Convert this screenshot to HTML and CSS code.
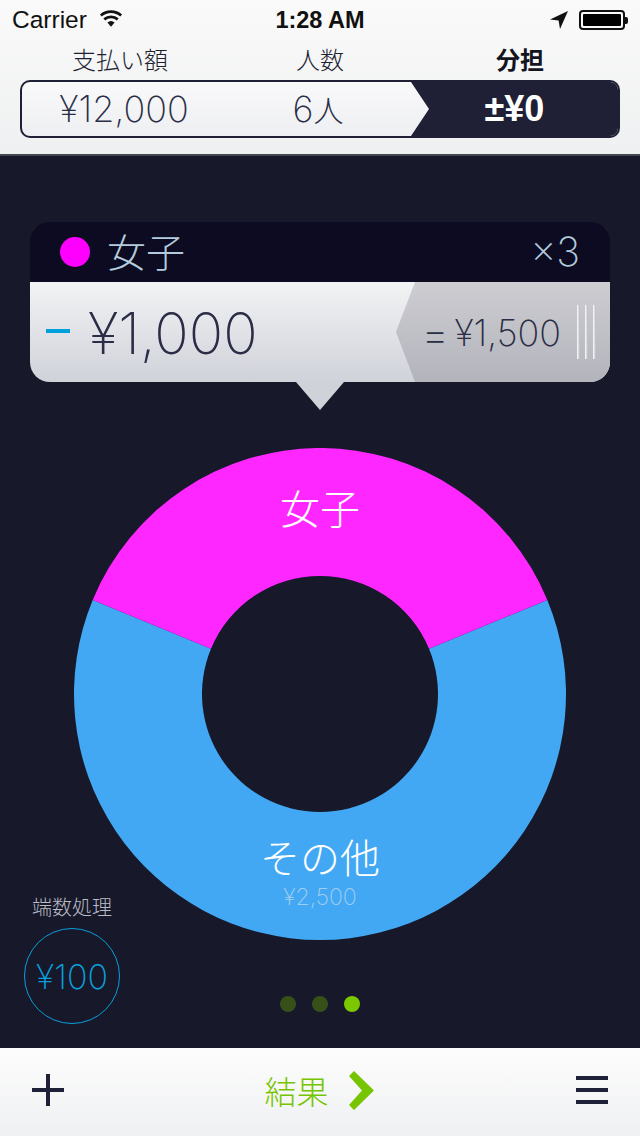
FILE: index.html
```html
<!DOCTYPE html>
<html lang="ja">
<head>
<meta charset="utf-8">
<title>分担</title>
<link rel="stylesheet" href="styles.css">
</head>
<body>
<div class="app">
  <header class="header">
    <div class="status">
      <div class="status-left">
        <span>Carrier</span>
        <svg class="wifi" width="24" height="18" viewBox="0 0 26 18"><path d="M13 17.500l-3.900-4.800a6 6 0 0 1 7.800 0z" fill="#111"/><path d="M5.700 9.400a11 11 0 0 1 14.600 0M2 5.200a16.600 16.600 0 0 1 22 0" fill="none" stroke="#111" stroke-width="3"/></svg>
      </div>
      <div class="status-time">1:28 AM</div>
      <div class="status-right">
        <svg width="20" height="20" viewBox="0 0 20 20"><path d="M19 1L1 9.600l8.600 1 1.400 8.400z" fill="#111"/></svg>
        <div class="battery"><div class="battery-fill"></div></div>
        <div class="battery-cap"></div>
      </div>
    </div>
    <div class="labels">
      <div class="label">支払い額</div>
      <div class="label">人数</div>
      <div class="label label-active">分担</div>
    </div>
    <div class="segment">
      <div class="seg seg-amount">¥12,000</div>
      <div class="seg seg-people">6<span class="unit">人</span></div>
      <div class="seg seg-split">±¥0</div>
    </div>
  </header>

  <main class="main">
    <section class="card">
      <div class="card-head">
        <span class="swatch"></span>
        <span class="group-name">女子</span>
        <span class="times">×3</span>
      </div>
      <div class="card-body">
        <span class="minus"></span>
        <span class="amount">¥1,000</span>
        <div class="total">
          <span class="equals">=</span>
          <span class="total-text">¥1,500</span>
          <span class="grip"><i></i><i></i><i></i></span>
        </div>
      </div>
      <div class="pointer"></div>
    </section>

    <div class="chart">
      <svg class="donut" width="492" height="492" viewBox="-246 -246 492 492">
        <path d="M-227.300 -94.100A246 246 0 1 0 227.300 -94.100L109 -45.200A118 118 0 1 1 -109 -45.200Z" fill="#42a8f3"/>
        <path d="M-227.300 -94.100A246 246 0 0 1 227.300 -94.100L109 -45.200A118 118 0 0 0 -109 -45.200Z" fill="#ff27ff"/>
      </svg>
      <div class="slice-label slice-top">女子</div>
      <div class="slice-label slice-bottom">その他</div>
      <div class="slice-value">¥2,500</div>
    </div>

    <div class="rounding">
      <div class="rounding-title">端数処理</div>
      <div class="rounding-circle">¥100</div>
    </div>

    <div class="dots">
      <span class="dot"></span>
      <span class="dot"></span>
      <span class="dot dot-on"></span>
    </div>
  </main>

  <footer class="tabbar">
    <svg width="32" height="32" viewBox="0 0 32 32"><path d="M14 0h4v14h14v4H18v14h-4V18H0v-4h14z" fill="#1e2138"/></svg>
    <div class="result">
      <span>結果</span>
      <svg width="25" height="39" viewBox="0 0 25 39"><path d="M0 5L5 0l20 19.500L5 39l-5-5 13-14.500z" fill="#77c500"/></svg>
    </div>
    <div class="menu"><i></i><i></i><i></i></div>
  </footer>
</div>
</body>
</html>
```
FILE: styles.css
```css
* { box-sizing: border-box; }
html, body { margin: 0; padding: 0; }
body {
  width: 640px;
  height: 1136px;
  overflow: hidden;
  font-family: Inter, "Noto Sans CJK JP", sans-serif;
  font-weight: 250;
  background: #171829;
}
.app { width: 640px; height: 1136px; display: flex; flex-direction: column; }

.header {
  height: 156px;
  flex: none;
  padding: 0 20px;
  background: linear-gradient(#fafafa, #eff0f1);
  border-bottom: 2px solid #45464f;
}
.status {
  height: 40px;
  margin: 0 -8px;
  display: grid;
  grid-template-columns: 1fr auto 1fr;
  align-items: center;
  color: #111;
  font-family: "Liberation Sans", sans-serif;
  font-weight: 400;
  font-size: 24.500px;
}
.status-left { display: flex; align-items: center; gap: 12px; }
.wifi { margin-top: -3px; }
.status-time { font-weight: 700; font-size: 23.500px; }
.status-right { display: flex; align-items: center; justify-content: flex-end; }
.status-right svg { margin-right: 10px; }
.battery {
  width: 46px;
  height: 20px;
  border: 2px solid #111;
  border-radius: 4px;
  padding: 2px;
}
.battery-fill { height: 100%; background: #000; border-radius: 1px; }
.battery-cap { width: 3px; height: 7px; background: #111; border-radius: 0 2px 2px 0; }

.labels {
  height: 40px;
  padding-bottom: 4px;
  display: grid;
  grid-template-columns: 200px 200px 200px;
  align-items: center;
  text-align: center;
  font-family: "Noto Sans CJK JP", sans-serif;
  font-weight: 300;
  font-size: 24px;
  color: #1e1f33;
}
.label-active { font-weight: 700; color: #14141f; }

.segment {
  height: 58px;
  border: 2px solid #1f2035;
  border-radius: 10px;
  display: flex;
  align-items: center;
  background: linear-gradient(#f9f9fa, #eeeff2);
  overflow: hidden;
  color: #2b2e48;
  font-size: 36px;
}
.seg { height: 100%; display: flex; align-items: center; justify-content: center; }
.seg-amount { width: 204px; }
.seg-people { width: 188px; padding-right: 4px; }
.unit { font-family: "Noto Sans CJK JP", sans-serif; font-size: 30px; line-height: 1; }
.seg-split {
  flex: 1;
  background: #1f2035;
  color: #fff;
  font-family: "Liberation Sans", sans-serif;
  font-weight: 700;
  font-size: 36px;
  clip-path: polygon(0 0, 100% 0, 100% 100%, 0 100%, 18px 50%);
  margin-left: -3px;
}

.main {
  flex: 1;
  position: relative;
  padding: 66px 30px 0;
  background: #171829;
}
.card { position: relative; height: 160px; }
.card-head {
  height: 60px;
  display: flex;
  align-items: center;
  padding: 0 30px;
  background: #0c0b22;
  border-radius: 20px 20px 0 0;
  color: #b3cbdc;
}
.swatch { width: 30px; height: 30px; border-radius: 50%; background: #ff00ff; }
.group-name {
  margin-left: 17px;
  margin-top: -3px;
  font-family: "Noto Sans CJK JP", sans-serif;
  font-weight: 300;
  font-size: 39px;
  line-height: 1;
}
.times { margin-left: auto; font-size: 40px; line-height: 1; }
.card-body {
  height: 100px;
  display: flex;
  align-items: center;
  border-radius: 0 0 20px 20px;
  background: linear-gradient(#f2f3f4, #d0d2da);
  overflow: hidden;
  color: #2a2d45;
}
.minus { width: 24px; height: 4px; margin-left: 16px; margin-top: -2px; background: #00a0dc; }
.amount { margin-left: 18px; margin-top: 3px; font-size: 57px; line-height: 1; }
.total {
  margin-left: auto;
  width: 214px;
  height: 100%;
  padding-right: 14px;
  display: flex;
  align-items: center;
  justify-content: flex-end;
  background: linear-gradient(#cdcdd2, #b3b3bc);
  clip-path: polygon(19px 0, 100% 0, 100% 100%, 19px 100%, 0 50%);
}
.equals { font-size: 44px; line-height: 36px; margin-right: 5px; margin-top: 3px; }
.total-text { font-size: 36px; line-height: 1; margin-top: 1px; margin-right: 16px; white-space: nowrap; }
.grip { display: flex; gap: 5px; height: 54px; }
.grip i { display: block; width: 3px; height: 100%; background: linear-gradient(90deg, #fff, #b5b5bd); }
.pointer {
  position: absolute;
  left: 266px;
  top: 160px;
  width: 48px;
  height: 28px;
  background: #d0d2da;
  clip-path: polygon(0 0, 100% 0, 50% 100%);
}

.chart {
  position: relative;
  width: 492px;
  height: 492px;
  margin: 66px auto 0;
  color: #fff;
  text-align: center;
}
.donut { display: block; }
.slice-label {
  position: absolute;
  left: 0;
  right: 0;
  font-family: "Noto Sans CJK JP", sans-serif;
  font-weight: 300;
  font-size: 40px;
  line-height: 48px;
}
.slice-top { top: 35px; }
.slice-bottom { top: 384px; }
.slice-value {
  position: absolute;
  left: 0;
  right: 0;
  top: 434px;
  font-size: 23px;
  line-height: 30px;
  color: #a3cdee;
}

.rounding {
  position: absolute;
  left: 24px;
  top: 737px;
  width: 96px;
  text-align: center;
}
.rounding-title {
  font-family: "Noto Sans CJK JP", sans-serif;
  font-weight: 300;
  font-size: 20px;
  line-height: 28px;
  color: #b9bcc6;
}
.rounding-circle {
  width: 96px;
  height: 96px;
  margin-top: 7px;
  border: 1px solid #0a9fdc;
  border-radius: 50%;
  display: flex;
  align-items: center;
  justify-content: center;
  color: #0a9fdc;
  font-size: 34px;
}

.dots {
  position: absolute;
  left: 0;
  right: 0;
  top: 840px;
  display: flex;
  justify-content: center;
  gap: 16px;
}
.dot { width: 16px; height: 16px; border-radius: 50%; background: #37501a; }
.dot-on { background: #7bc800; }

.tabbar {
  height: 88px;
  flex: none;
  display: flex;
  align-items: center;
  justify-content: space-between;
  padding: 0 32px;
  background: linear-gradient(#fdfdfd, #eff0f2);
}
.result {
  display: flex;
  align-items: center;
  gap: 20px;
  padding-right: 2px;
  color: #77c500;
  font-family: "Noto Sans CJK JP", sans-serif;
  font-weight: 300;
  font-size: 32px;
}
.result span { margin-top: -4px; }
.result svg { margin-top: -4px; }
.menu { width: 32px; display: flex; flex-direction: column; gap: 8px; margin-top: -4px; }
.menu i { display: block; height: 4px; background: #1e2138; }
.tabbar > svg { margin-top: -4px; }
```
